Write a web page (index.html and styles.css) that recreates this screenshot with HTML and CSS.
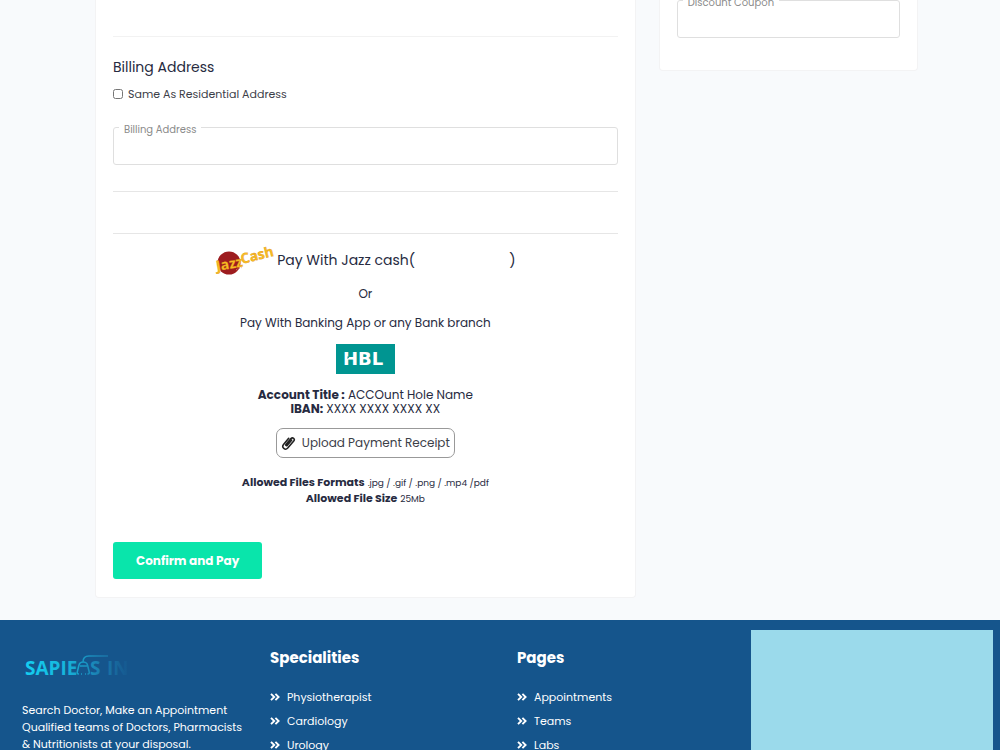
FILE: index.html
```html
<!DOCTYPE html>
<html lang="en">
<head>
<meta charset="utf-8">
<meta name="viewport" content="width=device-width, initial-scale=1">
<title>Checkout</title>
<link rel="stylesheet" href="styles.css">
</head>
<body>
<svg class="sprite" aria-hidden="true">
  <symbol id="chevrons" viewBox="0 0 10 8"><path d="M1 .8 4.2 4 1 7.2M5.4 .8 8.6 4 5.4 7.2" fill="none" stroke="currentColor" stroke-width="1.9"/></symbol>
</svg>
<main class="checkout">
  <form class="card payment">
    <hr class="rule rule-top">
    <h2 class="section-title">Billing Address</h2>
    <div class="check">
      <input class="check-box" type="checkbox" id="same">
      <label for="same">Same As Residential Address</label>
    </div>
    <div class="field">
      <label class="field-label" for="billing">Billing Address</label>
      <input class="field-input" type="text" id="billing">
    </div>
    <hr class="rule rule-after">
    <hr class="rule rule-pay">
    <section class="methods">
      <div class="jazz">
        <svg class="jazz-logo" viewBox="0 0 58 32" role="img" aria-label="JazzCash">
          <circle cx="14" cy="19" r="11.500" fill="#9d1c1f"/>
          <path d="M21 26l4-3M20 29l5-5M24 22l3 2" stroke="#d98a72" stroke-width="1" stroke-dasharray="1 1"/>
          <g class="jazz-text">
            <text x="2" y="27" transform="rotate(-10 2 27)">Jazz</text>
            <text x="27" y="20" transform="rotate(-14 27 20)">Cash</text>
          </g>
        </svg>
        <span class="jazz-name">Pay With Jazz cash(</span>
        <span class="jazz-close">)</span>
      </div>
      <p class="or">Or</p>
      <p class="bank">Pay With Banking App or any Bank branch</p>
      <svg class="hbl" viewBox="0 0 59 30" role="img" aria-label="HBL">
        <rect width="59" height="30" fill="#009591"/>
        <text class="hbl-word" x="7" y="21">HBL</text>
        <path d="M11.500 12.500v2.500l2.500-2.500z" fill="#009591"/>
      </svg>
      <p class="account"><strong>Account Title :</strong> ACCOunt Hole Name<br><strong>IBAN:</strong> XXXX XXXX XXXX XX</p>
      <button class="upload" type="button">
        <svg class="clip" viewBox="0 0 16 16" aria-hidden="true"><path d="M11.300 5 6.500 10.600c-.7.800-1.900-.2-1.200-1.100l5.300-6.200c1.900-2 4.700.4 3 2.500l-6.400 7.600c-2.700 3-7-.6-4.500-3.800L8.200 3" fill="none" stroke="currentColor" stroke-width="1.700" stroke-linecap="round"/></svg>
        Upload Payment Receipt
      </button>
      <p class="allowed"><strong>Allowed Files Formats</strong> <small>.jpg / .gif / .png / .mp4 /pdf</small><br><strong>Allowed File Size</strong> <small>25Mb</small></p>
    </section>
    <button class="confirm" type="submit">Confirm and Pay</button>
  </form>
  <aside class="card coupon">
    <div class="field">
      <label class="field-label" for="coupon">Discount Coupon</label>
      <input class="field-input" type="text" id="coupon">
    </div>
  </aside>
</main>
<footer class="footer">
  <section class="about">
    <svg class="brand" viewBox="0 0 110 24" role="img" aria-label="Sapiens In">
      <defs>
        <linearGradient id="fade" gradientUnits="userSpaceOnUse" x1="0" y1="0" x2="108" y2="0">
          <stop offset="0" stop-color="#14d0f2"/><stop offset=".4" stop-color="#16b5dc"/><stop offset=".72" stop-color="#1b7eb0"/><stop offset="1" stop-color="#15558c"/>
        </linearGradient>
      </defs>
      <g class="brand-text" fill="url(#fade)">
        <text x="3" y="21">SAPIE</text>
        <text x="68" y="21">S</text>
        <text x="85" y="21">IN</text>
      </g>
      <path d="M57 20c-2 0-2-1-1.500-3l1.500-6c.5-2 2-3 4-3s4 1 4.500 3l1.500 6c.5 2 .5 3-1.500 3M58 12h7M59 20h1M63 20h1M61 8c0-4 2-6 6-6h19" fill="none" stroke="url(#fade)" stroke-width="1.500"/>
    </svg>
    <p class="about-text">Search Doctor, Make an Appointment Qualified teams of Doctors, Pharmacists &amp; Nutritionists at your disposal.</p>
  </section>
  <nav class="links">
    <h3 class="links-title">Specialities</h3>
    <a class="link" href="#"><svg class="chevrons"><use href="#chevrons"/></svg>Physiotherapist</a>
    <a class="link" href="#"><svg class="chevrons"><use href="#chevrons"/></svg>Cardiology</a>
    <a class="link" href="#"><svg class="chevrons"><use href="#chevrons"/></svg>Urology</a>
  </nav>
  <nav class="links">
    <h3 class="links-title">Pages</h3>
    <a class="link" href="#"><svg class="chevrons"><use href="#chevrons"/></svg>Appointments</a>
    <a class="link" href="#"><svg class="chevrons"><use href="#chevrons"/></svg>Teams</a>
    <a class="link" href="#"><svg class="chevrons"><use href="#chevrons"/></svg>Labs</a>
  </nav>
  <div class="map"></div>
</footer>
</body>
</html>
```
FILE: styles.css
```css
* { box-sizing: border-box; }
body {
  margin: 0;
  height: 100vh;
  overflow: hidden;
  display: flex;
  flex-direction: column;
  background: #f8fafc;
  color: #272b41;
  font-family: Poppins, Inter, "Open Sans", sans-serif;
  font-size: 12px;
}
h2, h3, p { margin: 0; }
button, input { font: inherit; color: inherit; }
.sprite { position: absolute; width: 0; height: 0; }

.checkout {
  flex: none;
  display: grid;
  grid-template-columns: 540fr 259fr;
  gap: 23px;
  align-items: start;
  padding: 0 82px 22px 95px;
}
.card {
  background: #fff;
  border: 1px solid #f3f3f4;
  border-top: 0;
  border-radius: 0 0 4px 4px;
}
.payment { padding: 36px 17px 18px; }
.coupon { padding: 0 17px 32px; }

.rule { margin: 0; border: 0; border-top: 1px solid #e6e6e6; }
.rule-top { border-color: #f2f2f2; margin-bottom: 20px; }
.rule-after { margin-top: 26px; }
.rule-pay { margin-top: 41px; }
.section-title { font-size: 14px; line-height: 20px; font-weight: 400; }
.check { display: flex; align-items: center; gap: 5px; margin-top: 7px; font-size: 11px; line-height: 20px; color: #3c4048; }
.check-box { width: 10px; height: 10px; margin: 0; }
.field { position: relative; }
.check + .field { margin-top: 23px; }
.field-input {
  display: block;
  width: 100%;
  height: 38px;
  padding: 0 12px;
  border: 1px solid #dfdfdf;
  border-radius: 3px;
  background: #fff;
}
.field-label {
  position: absolute;
  left: 6px;
  top: -4px;
  padding: 0 5px;
  background: #fff;
  color: #8b8b8b;
  font-size: 10px;
  line-height: 14px;
}

.methods { display: flex; flex-direction: column; align-items: center; text-align: center; padding-top: 10px; }
.jazz { display: flex; align-items: center; font-size: 14px; }
.jazz-logo { width: 58px; height: 32px; margin-right: 4px; overflow: visible; }
.jazz-text { font: 700 14px "Open Sans", sans-serif; fill: #f8bd24; stroke: #d98a14; stroke-width: .3px; }
.jazz-close { margin-left: 94px; }
.or, .bank { line-height: 20px; }
.or { margin-top: 8px; }
.bank { margin-top: 9px; }
.hbl { width: 59px; height: 30px; margin-top: 11px; }
.hbl-word { font: 700 18px "DejaVu Sans", sans-serif; fill: #fff; }
.account { margin-top: 14px; line-height: 14px; }
.upload {
  display: flex;
  align-items: center;
  gap: 6px;
  height: 30px;
  margin-top: 12px;
  padding: 0 4px;
  border: 1px solid #999;
  border-radius: 7px;
  background: #fff;
  color: #3c4048;
}
.clip { width: 15px; height: 16px; color: #222; }
.allowed { margin-top: 16px; font-size: 11px; line-height: 16px; }
.allowed small { font-size: 9px; line-height: 12px; }
.confirm {
  display: block;
  height: 37px;
  margin-top: 36px;
  padding: 0 23px;
  border: 0;
  border-radius: 3px;
  background: #09e5ab;
  color: #fff;
  font-weight: 700;
}

.footer {
  flex: 1;
  min-height: 0;
  overflow: hidden;
  display: grid;
  grid-template-columns: 248fr 247fr 234fr 242fr;
  padding: 10px 7px 0 22px;
  background: #15558c;
  color: #fff;
  font-size: 11px;
}
.about { padding-top: 24px; }
.brand { display: block; width: 110px; height: 24px; overflow: visible; }
.brand-text { font: 700 19px "Open Sans", sans-serif; }
.about-text { width: 230px; margin-top: 24px; line-height: 17px; }
.links { display: flex; flex-direction: column; align-items: flex-start; padding-top: 17px; }
.links-title { margin-bottom: 16px; font-size: 15px; line-height: 22px; font-weight: 700; }
.link { display: flex; align-items: center; gap: 7px; height: 24px; color: #fff; text-decoration: none; }
.chevrons { width: 10px; height: 8px; }
.map { height: 200px; background: #9bdaeb; }
```
